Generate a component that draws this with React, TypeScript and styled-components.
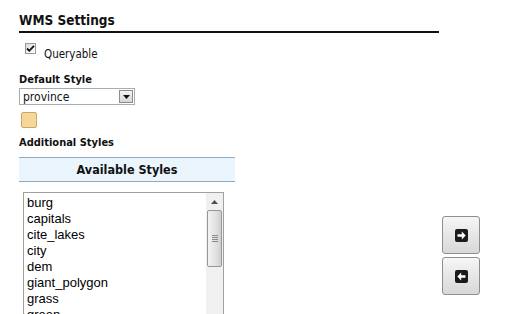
import styled, { createGlobalStyle } from 'styled-components';

const GlobalStyle = createGlobalStyle`
  html, body {
    margin: 0;
    padding: 0;
    background: #ffffff;
    overflow: hidden;
  }
  body {
    font-family: 'DejaVu Sans Condensed', 'DejaVu Sans', sans-serif;
    color: #111;
  }
`;

const Page = styled.div`
  padding: 11px 0 0 19px;
  width: 496px;
  height: 314px;
  box-sizing: border-box;
  overflow: hidden;
`;

const Title = styled.h2`
  margin: 0;
  width: 420px;
  font-size: 13.5px;
  font-weight: bold;
  line-height: 18px;
  padding-bottom: 2px;
  border-bottom: 2px solid #111;
`;

const CheckRow = styled.label`
  display: flex;
  align-items: flex-start;
  margin: 10px 0 0 6px;
  font-size: 11.5px;
`;

const CheckBox = styled.span`
  width: 11px;
  height: 11px;
  box-sizing: border-box;
  border: 1px solid #9a9a9a;
  background: linear-gradient(135deg, #dcdcdc, #ffffff);
  display: flex;
  align-items: center;
  justify-content: center;
`;

const CheckText = styled.span`
  margin: 5px 0 0 8px;
  line-height: 12px;
`;

const Label = styled.div<{ $top: number }>`
  margin-top: ${(p) => p.$top}px;
  font-size: 11px;
  font-weight: bold;
  line-height: 13px;
`;

const Select = styled.div`
  margin-top: 2px;
  width: 116px;
  height: 17px;
  box-sizing: border-box;
  border: 1px solid #a5acb2;
  display: flex;
  align-items: center;
  justify-content: space-between;
  padding-left: 3px;
  font-size: 12px;
`;

const DropButton = styled.span`
  width: 14px;
  height: 13px;
  margin-right: 1px;
  box-sizing: border-box;
  border: 1px solid #8c8c8c;
  background: linear-gradient(#f4f4f4, #d6d6d6);
  display: flex;
  align-items: center;
  justify-content: center;
`;

const Swatch = styled.div<{ $fill: string; $line: string }>`
  margin: 7px 0 0 2px;
  width: 16px;
  height: 16px;
  box-sizing: border-box;
  border: 1px solid ${(p) => p.$line};
  border-radius: 2px;
  background: ${(p) => p.$fill};
`;

const StylesRow = styled.div`
  display: flex;
  align-items: flex-start;
  margin-top: 8px;
`;

const Column = styled.div`
  width: 216px;
`;

const ColumnHeader = styled.div`
  height: 25px;
  box-sizing: border-box;
  border-top: 1px solid #8fa9c1;
  border-bottom: 1px solid #8fa9c1;
  background: #eaf5fd;
  text-align: center;
  font-size: 12.5px;
  font-weight: bold;
  line-height: 23px;
`;

const ListBox = styled.div`
  margin: 10px 0 0 4px;
  width: 201px;
  height: 140px;
  box-sizing: border-box;
  border: 1px solid #a0a0a0;
  display: flex;
`;

const Items = styled.div`
  flex: 1;
  padding: 2px 0 0 3px;
  font-family: 'Liberation Sans', Arial, sans-serif;
  font-size: 13px;
  line-height: 16px;
  color: #000;
`;

const ScrollBar = styled.div`
  width: 17px;
  background: #f0f0f0;
  display: flex;
  flex-direction: column;
  align-items: center;
`;

const ScrollArrow = styled.div`
  height: 17px;
  display: flex;
  align-items: center;
  justify-content: center;
`;

const ScrollThumb = styled.div`
  width: 15px;
  height: 57px;
  box-sizing: border-box;
  border: 1px solid #979797;
  border-radius: 2px;
  background: linear-gradient(90deg, #f3f3f3, #e1e1e1 60%, #cfcfcf);
  display: flex;
  align-items: center;
  justify-content: center;
`;

const Mover = styled.div`
  margin: 59px 0 0 207px;
  display: flex;
  flex-direction: column;
  gap: 3px;
`;

const MoveButton = styled.button`
  width: 38px;
  height: 38px;
  padding: 0;
  box-sizing: border-box;
  border: 1px solid #8e8e8e;
  border-radius: 3px;
  background: linear-gradient(#f6f6f6, #e6e6e6 50%, #d8d8d8);
  display: flex;
  align-items: center;
  justify-content: center;
`;

const styleNames = ['burg', 'capitals', 'cite_lakes', 'city', 'dem', 'giant_polygon', 'grass', 'green', 'poi'];

const ArrowIcon = ({ left }: { left?: boolean }) => (
  <svg width="13" height="13" viewBox="0 0 13 13">
    <rect x="0" y="0" width="13" height="13" rx="2" fill="#1a1a1a" />
    <g transform={left ? 'translate(13 0) scale(-1 1)' : undefined}>
      <path d="M2.5 5.3h4.3V2.6l3.9 3.9-3.9 3.9V7.7H2.5z" fill="#ffffff" />
    </g>
  </svg>
);

export default function App() {
  return (
    <Page>
      <GlobalStyle />
      <Title>WMS Settings</Title>
      <CheckRow>
        <CheckBox>
          <svg width="9" height="9" viewBox="0 0 9 9">
            <path d="M1 4.5l2.3 2.3L8 1.8" stroke="#111" strokeWidth="1.8" fill="none" />
          </svg>
        </CheckBox>
        <CheckText>Queryable</CheckText>
      </CheckRow>
      <Label $top={13}>Default Style</Label>
      <Select>
        <span>province</span>
        <DropButton>
          <svg width="7" height="4" viewBox="0 0 7 4">
            <path d="M0 0h7L3.5 4z" fill="#111" />
          </svg>
        </DropButton>
      </Select>
      <Swatch $fill="#f7d798" $line="#c9a766" />
      <Label $top={8}>Additional Styles</Label>
      <StylesRow>
        <Column>
          <ColumnHeader>Available Styles</ColumnHeader>
          <ListBox>
            <Items>
              {styleNames.map((name) => (
                <div key={name}>{name}</div>
              ))}
            </Items>
            <ScrollBar>
              <ScrollArrow>
                <svg width="7" height="4" viewBox="0 0 7 4">
                  <path d="M0 4h7L3.5 0z" fill="#505050" />
                </svg>
              </ScrollArrow>
              <ScrollThumb>
                <svg width="6" height="7" viewBox="0 0 6 7">
                  <path d="M0 .5h6M0 2.5h6M0 4.5h6M0 6.5h6" stroke="#8a8a8a" strokeWidth="1" />
                </svg>
              </ScrollThumb>
            </ScrollBar>
          </ListBox>
        </Column>
        <Mover>
          <MoveButton aria-label="Add style">
            <ArrowIcon />
          </MoveButton>
          <MoveButton aria-label="Remove style">
            <ArrowIcon left />
          </MoveButton>
        </Mover>
      </StylesRow>
    </Page>
  );
}
